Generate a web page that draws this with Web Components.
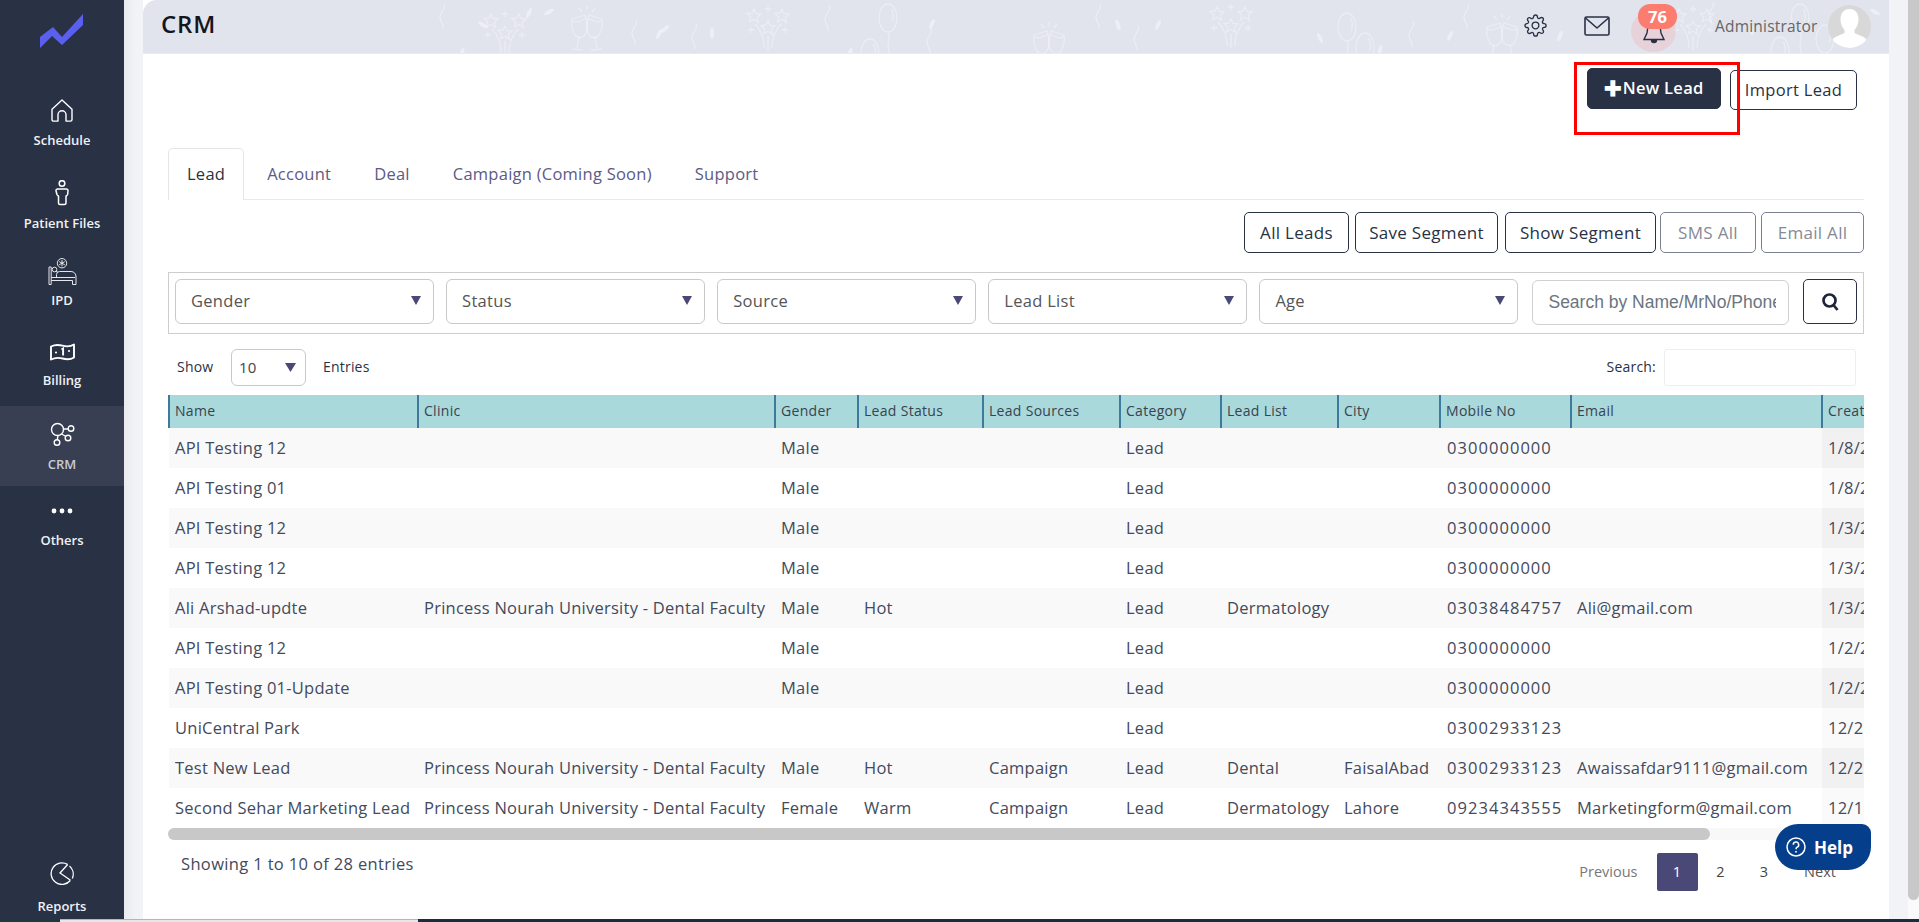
<!DOCTYPE html>
<html lang="en">
<head>
<meta charset="utf-8">
<title>CRM</title>
<style>
html,body{margin:0;padding:0;height:922px;overflow:hidden;background:#fff;font-family:"Open Sans","Noto Sans",sans-serif;font-size:16px;color:#293145}
</style>
</head>
<body>
<app-shell>
  <crm-sidebar slot="sidebar">
    <nav-item label="Schedule" style="--pt:19px;--gap:9px;--ih:23px">
      <svg width="22" height="23" viewBox="0 0 22 23" fill="none" stroke="#fff" stroke-width="1.4" stroke-linejoin="round"><path d="M1 10.2 11 1l10 9.2v10.3a1.6 1.6 0 0 1-1.6 1.6H15v-6.3a4 4 0 0 0-8 0v6.3H2.6A1.6 1.6 0 0 1 1 20.5z"/></svg>
    </nav-item>
    <nav-item label="Patient Files" style="--pt:31px;--gap:8px;--ih:26px">
      <svg width="14" height="26" viewBox="0 0 14 26" fill="none" stroke="#fff" stroke-width="1.5" stroke-linejoin="round"><circle cx="7" cy="3.5" r="2.8"/><path d="M2.6 9h8.8a1.6 1.6 0 0 1 1.6 1.7l-.3 3.3a2 2 0 0 1-.7 1.3l-1 .8v6.900a1.500 1.500 0 0 1-1.500 1.500H5a1.500 1.500 0 0 1-1.500-1.500v-6.900l-1-.8a2 2 0 0 1-.7-1.300L1 10.700A1.600 1.600 0 0 1 2.600 9z"/></svg>
    </nav-item>
    <nav-item label="IPD" style="--pt:26px;--gap:6px;--ih:27px">
      <svg width="29" height="27" viewBox="0 0 29 27" fill="none" stroke="#e4e6ea" stroke-width="1" stroke-linejoin="round"><circle cx="14" cy="5.200" r="4.700"/><path d="M14 2v6.400M11.200 3.600l5.600 3.200M16.800 3.600l-5.600 3.200"/><path d="M1 9v17.500h2.200V9zM3.200 19.500H27M3.200 22.500H24.500v4h3.500v-7.500a5 5 0 0 0-5-5.500H11.500a3 3 0 0 0-3 3v3"/><circle cx="6.500" cy="11.500" r="2.300"/><path d="M8 13l2 1.500"/></svg>
    </nav-item>
    <nav-item label="Billing" style="--pt:34px;--gap:10px;--ih:18px">
      <svg width="25" height="18" viewBox="0 0 25 18" fill="none"><path d="M1 3.500c4-2 7-2 11.500-.8S20 4 24 1.500v13c-4 2.500-7 2.200-11.500 1S5 14.500 1 16.500z" stroke="#fff" stroke-width="1.900" stroke-linejoin="round"/><path d="M11.500 6.500l1.600-1v7" stroke="#fff" stroke-width="1.900"/><circle cx="6" cy="9.500" r="1.100" fill="#fff"/><circle cx="19" cy="8" r="1.100" fill="#fff"/></svg>
    </nav-item>
    <nav-item label="CRM" active style="--pt:16px;--gap:10px;--ih:23px;--mt:17px;--pb:13px">
      <svg width="25" height="24" viewBox="0 0 25 24" fill="none" stroke="#fff" stroke-width="1.400"><circle cx="7.500" cy="7.500" r="6"/><circle cx="21" cy="6.500" r="2.800"/><circle cx="18" cy="16" r="2.800"/><circle cx="7" cy="20.500" r="2.800"/><path d="M13.500 7h4.700M11.500 12l4.700 2.500M8 13.500l-.7 4.200"/></svg>
    </nav-item>
    <nav-item label="Others" style="--pt:22px;--gap:17px;--ih:6px">
      <svg width="22" height="6" viewBox="0 0 22 6" fill="#fff"><circle cx="3" cy="3" r="2.400"/><circle cx="11" cy="3" r="2.400"/><circle cx="19" cy="3" r="2.400"/></svg>
    </nav-item>
    <nav-item label="Reports" style="--mt:auto;--pt:0px;--gap:12px;--ih:23px;--pb:4px">
      <svg width="24" height="23" viewBox="0 0 24 23" fill="none" stroke="#fff" stroke-width="1.300"><path d="M17.500 2.400A10.800 10.800 0 1 0 20.300 18.500"/><path d="M17.700 2.500 10 11l10.500 7.300"/><path d="M19.500 4a10.800 10.800 0 0 1 2.800 12.400"/></svg>
    </nav-item>
  </crm-sidebar>

  <crm-header title-text="CRM" user="Administrator" count="76"></crm-header>

  <page-actions>
    <span style="position:relative;display:inline-flex">
      <crm-button variant="solid" style="width:134px;height:41px;font-size:16.500px;letter-spacing:.3px;padding-bottom:2px"><b style="font-size:21px;line-height:20px;margin-right:0">✚</b>New Lead</crm-button>
      <red-mark></red-mark>
    </span>
    <crm-button style="width:127px;height:40px;margin-top:2px;font-size:16.500px;padding-bottom:2px">Import Lead</crm-button>
  </page-actions>

  <crm-tabs>
    <tab-item active style="padding-left:18px;padding-right:18px">Lead</tab-item>
    <tab-item>Account</tab-item>
    <tab-item>Deal</tab-item>
    <tab-item>Campaign (Coming Soon)</tab-item>
    <tab-item>Support</tab-item>
  </crm-tabs>

  <button-row>
    <crm-button style="width:105px;height:41px">All Leads</crm-button>
    <crm-button style="width:143px;height:41px;margin-left:6px">Save Segment</crm-button>
    <crm-button style="width:151px;height:41px;margin-left:7px">Show Segment</crm-button>
    <crm-button variant="muted" style="width:96px;height:41px;margin-left:4px">SMS All</crm-button>
    <crm-button variant="muted" style="width:103px;height:41px;margin-left:5px">Email All</crm-button>
  </button-row>

  <filter-bar>
    <filter-select>Gender</filter-select>
    <filter-select>Status</filter-select>
    <filter-select>Source</filter-select>
    <filter-select>Lead List</filter-select>
    <filter-select>Age</filter-select>
    <search-box placeholder="Search by Name/MrNo/Phone"></search-box>
  </filter-bar>

  <table-tools></table-tools>
  <lead-table></lead-table>
  <table-footer></table-footer>
  <help-button></help-button>
</app-shell>

<script>
function def(name, css, html, init){
  const t=document.createElement('template');
  t.innerHTML='<style>'+css+'</style>'+html;
  customElements.define(name,class extends HTMLElement{
    constructor(){super();this.attachShadow({mode:'open'}).appendChild(t.content.cloneNode(true));}
    connectedCallback(){ if(init&&!this._i){this._i=1;init.call(this,this.shadowRoot);} }
  });
}

def('app-shell',`
:host{display:block;height:922px;position:relative;overflow:hidden}
.top{display:flex;height:919px}
.gutter{width:19px;flex:none;background:linear-gradient(90deg,#e9ebef,#f2f3f6 60%)}
.gutter.r{background:#f2f3f6}
.main{width:1746px;flex:none;background:#fff;display:flex;flex-direction:column}
.bar{width:11px;flex:none;background:#fafafa}
.thumb{height:900px;background:#c8c8c8;border-radius:0 0 6px 6px}
.strip{display:flex;height:3px}
.strip i{display:block}
`,`
<div class="top">
  <slot name="sidebar"></slot>
  <div class="gutter"></div>
  <div class="main"><slot></slot></div>
  <div class="gutter r"></div>
  <div class="bar"><div class="thumb"></div></div>
</div>
<div class="strip">
  <i style="width:60px;background:#1b3a40"></i>
  <i style="width:358px;background:#e6e6e6;border-top:1px solid #b5b5b5;box-sizing:border-box"></i>
  <i style="flex:1;background:#1a2c3d"></i>
</div>`);

def('crm-sidebar',`
:host{display:flex;flex-direction:column;width:124px;flex:none;height:919px;background:#293145}
.logo{height:80px;flex:none}
svg{display:block}
`,`
<div class="logo"><svg width="124" height="80" viewBox="0 0 124 80"><polygon fill="#5b5fef" points="40,37 53,27 62,37 83,14 83,25 62,45 52,36 40,48"/></svg></div>
<slot></slot>`);

def('nav-item',`
:host{display:flex;flex-direction:column;align-items:center;flex:none;margin-top:var(--mt,0);padding-top:var(--pt,0);padding-bottom:var(--pb,0);color:#f0f1f4}
:host([active]){background:#383f52;color:#c9ccd4}
.i{height:var(--ih,23px);display:flex;align-items:center;justify-content:center}
.l{margin-top:var(--gap,8px);height:18px;line-height:18px;font-size:13px;font-weight:600;white-space:nowrap}
::slotted(svg){display:block}
`,`<div class="i"><slot></slot></div><div class="l"></div>`,function(r){r.querySelector('.l').textContent=this.getAttribute('label');});

def('crm-header',`
:host{display:block;height:54px;flex:none;position:relative;background:#e1e4ed;border-top-left-radius:14px;border-bottom:1px solid #e9ebf1;box-sizing:border-box;overflow:hidden}
.bg{position:absolute;left:0;top:0;width:1746px;height:54px;stroke:#fff;fill:none;stroke-opacity:.34;stroke-width:1.3}
.row{position:relative;display:flex;align-items:center;height:54px;padding:0 18px 0 18px}
h1{margin:0;font-size:24px;font-weight:600;letter-spacing:.9px;color:#14161c;flex:1;line-height:54px;position:relative;top:-3px}
.gear{display:block;width:23px;height:23px;margin-top:-4px}
.mail{display:block;width:26px;height:20px;margin-left:37px;margin-top:-3px}
.bell{position:relative;width:45px;height:42px;border-radius:50%;background:rgba(253,124,112,.17);margin-left:21px;margin-top:8px;flex:none}
.bell svg{position:absolute;left:12px;top:16px}
.badge{position:absolute;left:7px;top:-6px;width:39px;height:25px;line-height:25px;border-radius:12px;background:#fd7c70;color:#fff;font-weight:700;font-size:16.500px;text-align:center}
.user{width:107px;margin-left:39px;margin-right:6px;font-size:15.500px;letter-spacing:.2px;color:#666;white-space:nowrap;margin-top:-2px}
.ava{width:43px;height:43px;border-radius:50%;background:#d8d8d8;overflow:hidden;flex:none;margin-top:-2px}
`,`
<svg class="bg" viewBox="143 0 1746 54" aria-hidden="true">
  <defs>
    <g id="gl"><path d="M-15 11l13-4c2 6 3 12 1 18-2 5-8 6-11 2-3-5-4-11-3-16zM-15 13c4 2 9 0 13-2"/><path d="M-8 29l-2 11M-15 41l11 1"/><path d="M15 11l-13-4c-2 6-3 12-1 18 2 5 8 6 11 2 3-5 4-11 3-16zM15 13c-4 2-9 0-13-2"/><path d="M8 29l2 11M15 41l-11 1"/><path d="M-8 0l3 4M0-2v4M8 0l-3 4"/></g>
    <path id="st" d="M0-7l2 4.500 5 .5-3.700 3.300 1 4.900L0 3.200-4.300 5.700l1-4.900L-7-2.500l5-.5z"/>
    <g id="fw"><use href="#st" x="-14" y="0"/><use href="#st" x="14" y="0"/><use href="#st" x="0" y="12"/><path d="M0-10v6M-3-7h6M-20 14h6M-17 11v6M17 11v6M14 14h6"/><path d="M-13 8c5 5 9 12 9 24M13 8c-5 5-9 12-9 24M0 20v14"/></g>
    <g id="bl"><ellipse cx="0" cy="15" rx="9" ry="14"/><path d="M3 6c3 3 3 9 1 13"/><path d="M0 29c3 5 0 9 0 13s2 6 0 10"/></g>
    <path id="sq" d="M3 0c3 4-4 8-4 13s4 6 3 12"/>
    <ellipse id="cf" rx="2" ry="5.500" fill="#fff" fill-opacity=".4" stroke="none"/>
  </defs>
  <use href="#fw" x="505" y="21"/><use href="#fw" x="768" y="16"/><use href="#fw" x="1231" y="14"/><use href="#fw" x="1693" y="16"/>
  <use href="#gl" x="587" y="8"/><use href="#gl" x="1049" y="24"/><use href="#gl" x="1502" y="16"/>
  <use href="#bl" x="888" y="3"/><use href="#bl" x="1347" y="12"/><use href="#bl" x="1365" y="32"/><use href="#bl" x="870" y="38"/><use href="#bl" x="1800" y="3"/><use href="#bl" x="1825" y="24"/><use href="#bl" x="1780" y="36"/>
  <use href="#sq" x="441" y="4"/><use href="#sq" x="633" y="20"/><use href="#sq" x="693" y="24"/><use href="#sq" x="826" y="6"/><use href="#sq" x="928" y="29"/><use href="#sq" x="1097" y="4"/><use href="#sq" x="1135" y="26"/><use href="#sq" x="1410" y="22"/><use href="#sq" x="1710" y="2"/><use href="#sq" x="1465" y="4"/>
  <use href="#cf" transform="translate(483 25) rotate(-60)"/><use href="#cf" transform="translate(462 53) rotate(15)"/><use href="#cf" transform="translate(529 13) rotate(25)"/><use href="#cf" transform="translate(549 12) rotate(60)"/><use href="#cf" transform="translate(659 34) rotate(25)"/><use href="#cf" transform="translate(665 29) rotate(50)"/><use href="#cf" transform="translate(712 33) rotate(0)"/><use href="#cf" transform="translate(850 53) rotate(15)"/><use href="#cf" transform="translate(932 24) rotate(25)"/><use href="#cf" transform="translate(1118 25) rotate(-20)"/><use href="#cf" transform="translate(1158 25) rotate(25)"/><use href="#cf" transform="translate(1320 38) rotate(-25)"/><use href="#cf" transform="translate(1380 50) rotate(15)"/><use href="#cf" transform="translate(1450 36) rotate(25)"/><use href="#cf" transform="translate(1560 36) rotate(20)"/><use href="#cf" transform="translate(1752 30) rotate(0)"/><use href="#cf" transform="translate(1838 12) rotate(60)"/><use href="#cf" transform="translate(1875 12) rotate(-60)"/>
</svg>
<div class="row">
  <h1 id="t"></h1>
  <svg class="gear" viewBox="0 0 24 24" fill="none" stroke="#293145" stroke-width="1.400" stroke-linejoin="round"><path d="M12 15.500a3.500 3.500 0 1 0 0-7 3.500 3.500 0 0 0 0 7z"/><path d="M19.400 15a1.650 1.650 0 0 0 .33 1.820l.06.06a2 2 0 0 1 0 2.830 2 2 0 0 1-2.830 0l-.06-.06a1.650 1.650 0 0 0-1.820-.33 1.650 1.650 0 0 0-1 1.510V21a2 2 0 0 1-2 2 2 2 0 0 1-2-2v-.09A1.650 1.650 0 0 0 9 19.400a1.650 1.650 0 0 0-1.820.33l-.06.06a2 2 0 0 1-2.830 0 2 2 0 0 1 0-2.830l.06-.06a1.650 1.650 0 0 0 .33-1.820 1.650 1.650 0 0 0-1.510-1H3a2 2 0 0 1-2-2 2 2 0 0 1 2-2h.09A1.650 1.650 0 0 0 4.600 9a1.650 1.650 0 0 0-.33-1.820l-.06-.06a2 2 0 0 1 0-2.830 2 2 0 0 1 2.830 0l.06.06a1.650 1.650 0 0 0 1.820.33H9a1.650 1.650 0 0 0 1-1.510V3a2 2 0 0 1 2-2 2 2 0 0 1 2 2v.09a1.650 1.650 0 0 0 1 1.510 1.650 1.650 0 0 0 1.820-.33l.06-.06a2 2 0 0 1 2.830 0 2 2 0 0 1 0 2.830l-.06.06a1.650 1.650 0 0 0-.33 1.820V9a1.650 1.650 0 0 0 1.510 1H21a2 2 0 0 1 2 2 2 2 0 0 1-2 2h-.09a1.650 1.650 0 0 0-1.510 1z"/></svg>
  <svg class="mail" viewBox="0 0 26 20" fill="none" stroke="#293145" stroke-width="1.600" stroke-linejoin="round"><rect x="1" y="1" width="24" height="18" rx="1.500"/><path d="M1.500 2 13 12 24.500 2"/></svg>
  <div class="bell">
    <svg width="22" height="20" viewBox="0 0 22 20" fill="none" stroke="#293145" stroke-width="1.400"><path d="M5 0l-1 7-3 6.500h20L18 7l-1-7"/><path d="M8.500 14a2.500 2.500 0 0 0 5 0" fill="#293145"/></svg>
    <div class="badge" id="b"></div>
  </div>
  <div class="user" id="u"></div>
  <div class="ava"><svg width="43" height="43" viewBox="0 0 43 43" fill="#fff"><path d="M21.500 4c6 0 9 4.500 9 10.500 0 4-1.500 8-4 10.500v3l9 4c3 1.500 4.500 4 5 7-4.500 3-12 4-19 4s-14-1-19-4c.5-3 2-5.500 5-7l9-4v-3c-2.500-2.500-4-6.500-4-10.500C12.500 8.500 15.500 4 21.500 4z"/></svg></div>
</div>`,function(r){
  r.getElementById('t').textContent=this.getAttribute('title-text');
  r.getElementById('u').textContent=this.getAttribute('user');
  r.getElementById('b').textContent=this.getAttribute('count');
});

def('page-actions',`:host{display:flex;justify-content:flex-end;gap:9px;align-items:flex-start;height:80px;padding:14px 32px 0 0;flex:none}`,`<slot></slot>`);

def('crm-button',`
:host{display:inline-flex;align-items:center;justify-content:center;box-sizing:border-box;border:1px solid #293145;border-radius:5px;background:#fff;color:#293145;font-size:17px;letter-spacing:.3px;white-space:nowrap;flex:none}
:host([variant=solid]){background:#293145;color:#fff;font-weight:600;border-color:#293145}
:host([variant=muted]){border-color:#7b8190;color:#858a97}
`,`<slot></slot>`);

def('red-mark',`:host{position:absolute;left:-13px;top:-6px;width:166px;height:73px;box-sizing:border-box;border:3px solid #f00;pointer-events:none}`,``);

def('crm-tabs',`:host{display:flex;gap:3px;margin:0 25px;height:51px;flex:none;border-bottom:1px solid #e8e9ec}`,`<slot></slot>`);
def('tab-item',`
:host{display:flex;align-items:center;padding:0 19px 2px;box-sizing:border-box;height:52px;font-size:16.500px;letter-spacing:.25px;color:#5c5a86;white-space:nowrap;border:1px solid transparent;border-bottom:0;border-radius:5px 5px 0 0}
:host([active]){color:#293145;border-color:#e4e5e9;background:#fff;}
`,`<slot></slot>`);

def('button-row',`:host{display:flex;justify-content:flex-end;margin:12px 25px 0;flex:none}`,`<slot></slot>`);

def('filter-bar',`:host{display:flex;align-items:flex-start;gap:12px;box-sizing:border-box;height:62px;margin:19px 25px 0;padding:6px;border:1px solid #cdcdcd;flex:none}`,`<slot></slot>`);
def('filter-select',`
:host{display:flex;align-items:center;justify-content:space-between;box-sizing:border-box;width:259.100px;height:45px;padding:0 12px 2px 15px;border:1px solid #c9c9c9;border-radius:6px;font-size:16.500px;letter-spacing:.3px;color:#555;flex:none}
svg{display:block}
`,`<slot></slot><svg width="10" height="9" viewBox="0 0 10 9"><polygon points="0,0 10,0 5,9" fill="#4a4876"/></svg>`);
def('search-box',`
:host{display:flex;align-items:flex-start;flex:none;margin-left:2px}
input{box-sizing:border-box;width:257px;height:45px;margin-top:1px;padding:0 12px 0 15px;border:1px solid #d0d0d0;border-radius:6px;font:17.500px "Liberation Sans",sans-serif;outline:none}
input::placeholder{color:#6c757d;opacity:1}
.b{box-sizing:border-box;width:54px;height:45px;margin-left:14px;border:1px solid #293145;border-radius:5px;display:flex;align-items:center;justify-content:center}
`,`<input type="text"><div class="b"><svg width="17" height="18" viewBox="0 0 17 18" fill="none" stroke="#1e2638" stroke-width="2.700"><circle cx="7.500" cy="7.500" r="6"/><path d="M11.500 12l4 5"/></svg></div>`,function(r){r.querySelector('input').placeholder=this.getAttribute('placeholder');});

def('table-tools',`
:host{display:flex;align-items:flex-start;justify-content:space-between;height:37px;margin:15px 25px 9px;padding:0 8px 0 9px;font-size:14px;letter-spacing:.2px;color:#293145;flex:none;line-height:35px}
.l,.r{display:flex}
.show{width:54px}
.sel{box-sizing:border-box;width:75px;height:37px;margin:0 17px 0 0;padding:0 9px 0 7px;border:1px solid #c9c9c9;border-radius:6px;display:flex;align-items:center;justify-content:space-between;font-size:15px;color:#444}
.in{box-sizing:border-box;width:192px;height:37px;margin-left:8px;border:1px solid #eee;border-radius:3px}
`,`<div class="l"><span class="show">Show</span><div class="sel"><span>10</span><svg width="11" height="9" viewBox="0 0 11 9"><polygon points="0,0 11,0 5.500,9" fill="#4a4876"/></svg></div><span>Entries</span></div><div class="r"><span>Search:</span><div class="in"></div></div>`);

def('lead-table',`
:host{display:block;width:1696px;margin:0 25px;flex:none;overflow:hidden}
table{border-collapse:collapse;table-layout:fixed;width:1873px}
th{height:33px;padding:0 0 2px 5px;background:#a9d9da;border-left:2px solid #3d7a9c;font-size:14px;letter-spacing:.3px;font-weight:400;color:#3a4150;text-align:left;white-space:nowrap;overflow:hidden;box-sizing:border-box}
td{height:40px;padding:0 0 2px 6px;font-size:16.500px;letter-spacing:.25px;color:#434a5c;white-space:nowrap;overflow:hidden;box-sizing:border-box}
td:nth-child(9){letter-spacing:1.050px;padding-left:7px}
tbody tr:nth-child(odd) td{background:#f9f9f9}
tbody td:last-child{background:#fafafa}
tbody tr:nth-child(odd) td:last-child{background:#f1f1f1}
.sb{height:12px;background:#f8f8f8;border-radius:6px}
.sb i{display:block;width:1542px;height:12px;background:#c8c8c8;border-radius:6px}
`,`<table><colgroup></colgroup><thead><tr></tr></thead><tbody></tbody></table><div class="sb"><i></i></div>`,function(r){
  const cols=[['Name',249],['Clinic',357],['Gender',83],['Lead Status',125],['Lead Sources',137],['Category',101],['Lead List',117],['City',102],['Mobile No',131],['Email',251],['Creat',220]];
  const P='Princess Nourah University - Dental Faculty',Z='0300000000';
  const rows=[
  ['API Testing 12','','Male','','','Lead','','',Z,'','1/8/2'],
  ['API Testing 01','','Male','','','Lead','','',Z,'','1/8/2'],
  ['API Testing 12','','Male','','','Lead','','',Z,'','1/3/2'],
  ['API Testing 12','','Male','','','Lead','','',Z,'','1/3/2'],
  ['Ali Arshad-updte',P,'Male','Hot','','Lead','Dermatology','','03038484757','Ali@gmail.com','1/3/2'],
  ['API Testing 12','','Male','','','Lead','','',Z,'','1/2/2'],
  ['API Testing 01-Update','','Male','','','Lead','','',Z,'','1/2/2'],
  ['UniCentral Park','','','','','Lead','','','03002933123','','12/2'],
  ['Test New Lead',P,'Male','Hot','Campaign','Lead','Dental','FaisalAbad','03002933123','Awaissafdar9111@gmail.com','12/2'],
  ['Second Sehar Marketing Lead',P,'Female','Warm','Campaign','Lead','Dermatology','Lahore','09234343555','Marketingform@gmail.com','12/1']];
  const cg=r.querySelector('colgroup'),hr=r.querySelector('thead tr'),tb=r.querySelector('tbody');
  cols.forEach(c=>{const k=document.createElement('col');k.style.width=c[1]+'px';cg.appendChild(k);const h=document.createElement('th');h.textContent=c[0];hr.appendChild(h);});
  rows.forEach(d=>{const t=document.createElement('tr');d.forEach(v=>{const c=document.createElement('td');c.textContent=v;t.appendChild(c);});tb.appendChild(t);});
});

def('table-footer',`
:host{display:flex;justify-content:space-between;align-items:flex-start;margin:12px 25px 0;padding:0 28px 0 13px;flex:none;font-size:16.500px;letter-spacing:.35px;color:#434a5c}
.s{line-height:24px}
.p{display:flex;align-items:center;height:38px;font-size:14.500px;letter-spacing:0;margin-top:1px}
.p span{display:block;width:41px;height:38px;line-height:38px;text-align:center;margin-right:2.500px;color:#444}
.p .cur{background:#4a4876;color:#fff;border-radius:2px}
.p .prev{width:auto;color:#777;margin-right:19px}
.p .next{width:32px;margin:0;white-space:nowrap;color:#555}
`,`<div class="s">Showing 1 to 10 of 28 entries</div><div class="p"><span class="prev">Previous</span><span class="cur">1</span><span>2</span><span>3</span><span class="next" style="margin-left:17px">Next</span></div>`);

def('help-button',`
:host{position:absolute;left:1775px;top:824px;width:96px;height:46px;box-sizing:border-box;padding-left:11px;background:#053f8c;color:#fff;border-radius:23px 9px 23px 23px;display:flex;align-items:center;gap:8px;font-weight:700;font-size:17px}
svg{display:block}
`,`<svg width="20" height="20" viewBox="0 0 20 20" fill="none" stroke="#fff" stroke-width="1.500"><circle cx="10" cy="10" r="9"/><path d="M7.300 7.800a2.700 2.700 0 1 1 3.900 2.400c-.8.400-1.200 1-1.200 2"/><path d="M10 14v1.500" stroke-width="1.700"/></svg><span>Help</span>`);
</script>
</body>
</html>
